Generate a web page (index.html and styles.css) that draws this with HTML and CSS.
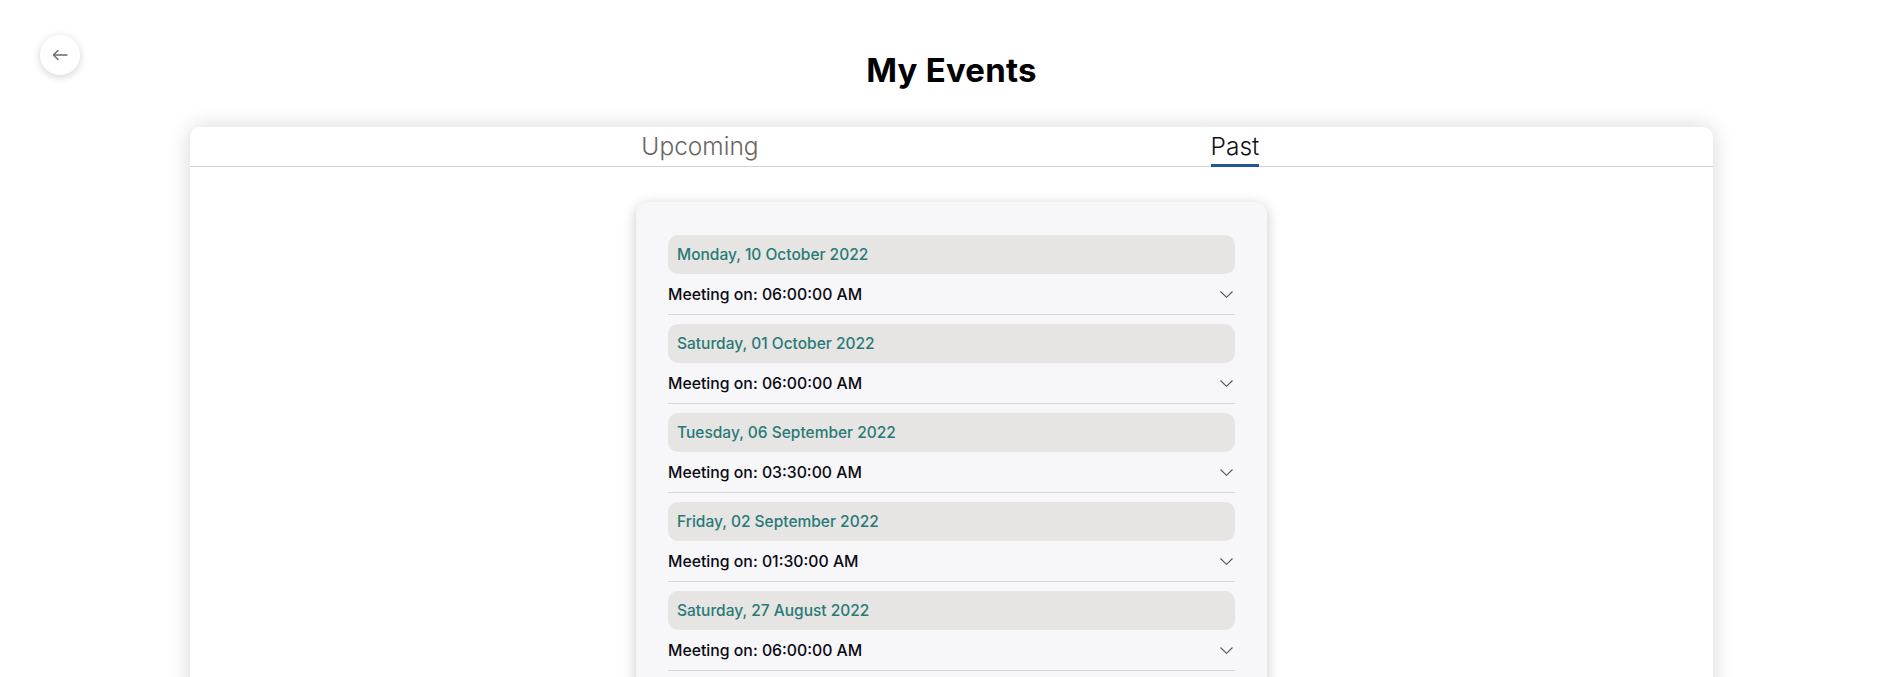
FILE: index.html
```html
<!DOCTYPE html>
<html lang="en">
<head>
<meta charset="utf-8">
<title>My Events</title>
<link rel="stylesheet" href="styles.css">
</head>
<body>
<button class="back-btn" aria-label="Back">
  <svg width="16" height="12" viewBox="0 0 16 12" fill="none" stroke="#6a6a6a" stroke-width="1.4" stroke-linecap="round" stroke-linejoin="round"><path d="M15 6H2"/><path d="M6 1.5L1.5 6L6 10.5"/></svg>
</button>
<main class="page">
  <h1 class="title">My Events</h1>
  <section class="card">
    <nav class="tabs">
      <div class="tab-cell"><span class="tab">Upcoming</span></div>
      <div class="tab-cell"><span class="tab tab-active">Past</span></div>
    </nav>
    <div class="card-body">
      <div class="panel">
        <div class="event">
          <div class="event-date">Monday, 10 October 2022</div>
          <div class="event-row"><span>Meeting on: 06:00:00 AM</span><svg class="chev" width="13" height="7" viewBox="0 0 13 7" fill="none" stroke="#555" stroke-width="1.1"><path d="M0.5 0.5L6.5 6.3L12.5 0.5"/></svg></div>
        </div>
        <div class="event">
          <div class="event-date">Saturday, 01 October 2022</div>
          <div class="event-row"><span>Meeting on: 06:00:00 AM</span><svg class="chev" width="13" height="7" viewBox="0 0 13 7" fill="none" stroke="#555" stroke-width="1.1"><path d="M0.5 0.5L6.5 6.3L12.5 0.5"/></svg></div>
        </div>
        <div class="event">
          <div class="event-date">Tuesday, 06 September 2022</div>
          <div class="event-row"><span>Meeting on: 03:30:00 AM</span><svg class="chev" width="13" height="7" viewBox="0 0 13 7" fill="none" stroke="#555" stroke-width="1.1"><path d="M0.5 0.5L6.5 6.3L12.5 0.5"/></svg></div>
        </div>
        <div class="event">
          <div class="event-date">Friday, 02 September 2022</div>
          <div class="event-row"><span>Meeting on: 01:30:00 AM</span><svg class="chev" width="13" height="7" viewBox="0 0 13 7" fill="none" stroke="#555" stroke-width="1.1"><path d="M0.5 0.5L6.5 6.3L12.5 0.5"/></svg></div>
        </div>
        <div class="event">
          <div class="event-date">Saturday, 27 August 2022</div>
          <div class="event-row"><span>Meeting on: 06:00:00 AM</span><svg class="chev" width="13" height="7" viewBox="0 0 13 7" fill="none" stroke="#555" stroke-width="1.1"><path d="M0.5 0.5L6.5 6.3L12.5 0.5"/></svg></div>
        </div>
      </div>
    </div>
  </section>
</main>
</body>
</html>
```
FILE: styles.css
```css
* { box-sizing: border-box; }
html, body { margin: 0; padding: 0; background: #fff; }
body {
  font-family: "Inter", "Noto Sans", "Liberation Sans", sans-serif;
  color: #000;
  overflow: hidden;
}
.back-btn {
  position: absolute;
  top: 35px;
  left: 40px;
  width: 40px;
  height: 40px;
  border-radius: 50%;
  border: none;
  background: #fff;
  box-shadow: 0 2px 8px rgba(0,0,0,0.18);
  display: flex;
  align-items: center;
  justify-content: center;
  padding: 0;
  cursor: pointer;
}
.page {
  padding-top: 50px;
}
.title {
  margin: 0 0 37px;
  padding-left: 6px;
  text-align: center;
  font-size: 33px;
  line-height: 40px;
  font-weight: 700;
  letter-spacing: 0.2px;
}
.card {
  width: 1523px;
  margin: 0 auto 0 190px;
  background: #fff;
  border-radius: 10px 10px 0 0;
  box-shadow: 0 0 22px rgba(0,0,0,0.16);
  min-height: 600px;
}
.tabs {
  display: grid;
  grid-template-columns: 200px 200px;
  column-gap: 335px;
  justify-content: center;
  padding-left: 32px;
  height: 40px;
  border-bottom: 1px solid #d2d2d2;
}
.tab-cell {
  display: flex;
  justify-content: center;
  align-items: flex-start;
}
.tab {
  display: block;
  height: 40px;
  padding-top: 4px;
  font-size: 24.5px;
  line-height: 30px;
  font-weight: 300;
  color: #6a6563;
  border-bottom: 3px solid transparent;
}
.tab-active {
  color: #111;
  border-bottom-color: #1d5699;
}
.card-body {
  padding-top: 35px;
  display: flex;
  justify-content: center;
}
.panel {
  width: 631px;
  background: #f7f7f9;
  border-radius: 12px;
  box-shadow: 0 3px 14px rgba(0,0,0,0.22);
  padding: 33px 32px 32px;
}
.event {
  margin-bottom: 9px;
}
.event-date {
  height: 39px;
  line-height: 39px;
  padding-left: 9px;
  background: #e6e5e3;
  border-radius: 10px;
  color: #287a76;
  font-size: 15.5px;
  font-weight: 500;
}
.event-row {
  height: 41px;
  display: flex;
  align-items: center;
  justify-content: space-between;
  padding-right: 2px;
  border-bottom: 1px solid #d4d4dc;
  font-size: 15.8px;
  font-weight: 500;
  color: #0a0a14;
}
.chev { display: block; }
```
